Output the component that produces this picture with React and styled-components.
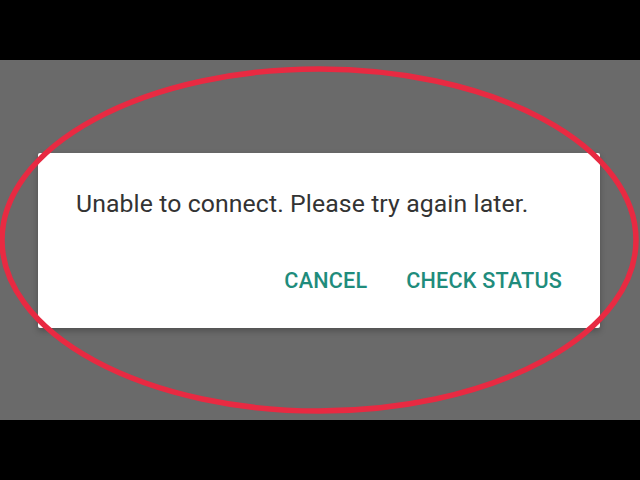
import React from "react"
import styled, { createGlobalStyle } from "styled-components"

const GlobalStyle = createGlobalStyle`
  html, body {
    margin: 0;
    padding: 0;
    background: #000;
  }
  body {
    font-family: Roboto, "Noto Sans", sans-serif;
  }
`

const Screen = styled.div`
  width: 640px;
  height: 480px;
  display: flex;
  flex-direction: column;
  background: #000;
  overflow: hidden;
`

const Letterbox = styled.div`
  height: 60px;
  background: #000;
`

const Stage = styled.div`
  position: relative;
  height: 360px;
  background: #6a6a6a;
  padding: 93px 40px 0 38px;
  box-sizing: border-box;
`

const Dialog = styled.div`
  width: 562px;
  height: 175px;
  box-sizing: border-box;
  background: #fff;
  border-radius: 2px;
  box-shadow: 0 3px 6px rgba(0, 0, 0, 0.25);
  padding: 36px 38px 0 38px;
  display: flex;
  flex-direction: column;
`

const Message = styled.p`
  margin: 0;
  font-size: 24.8px;
  line-height: 30px;
  color: #333;
  letter-spacing: 0.1px;
`

const Actions = styled.div`
  display: flex;
  justify-content: flex-end;
  gap: 39px;
  margin-top: 50px;
`

const ActionButton = styled.button`
  border: 0;
  background: none;
  padding: 0;
  font-family: Roboto, "Noto Sans", sans-serif;
  font-weight: 500;
  font-size: 21.6px;
  line-height: 24px;
  color: #1f8c7c;
  letter-spacing: 0.2px;
`

const Highlight = styled.svg`
  position: absolute;
  left: 0;
  top: 0;
  width: 640px;
  height: 360px;
  pointer-events: none;
`

const App = () => {
  return (
    <>
      <GlobalStyle />
      <Screen>
        <Letterbox />
        <Stage>
          <Dialog>
            <Message>Unable to connect. Please try again later.</Message>
            <Actions>
              <ActionButton>CANCEL</ActionButton>
              <ActionButton>CHECK STATUS</ActionButton>
            </Actions>
          </Dialog>
          <Highlight viewBox="0 0 640 360">
            <ellipse
              cx="319"
              cy="180"
              rx="317"
              ry="171"
              fill="none"
              stroke="#e82a42"
              strokeWidth="5.5"
            />
          </Highlight>
        </Stage>
        <Letterbox />
      </Screen>
    </>
  )
}

export default App
